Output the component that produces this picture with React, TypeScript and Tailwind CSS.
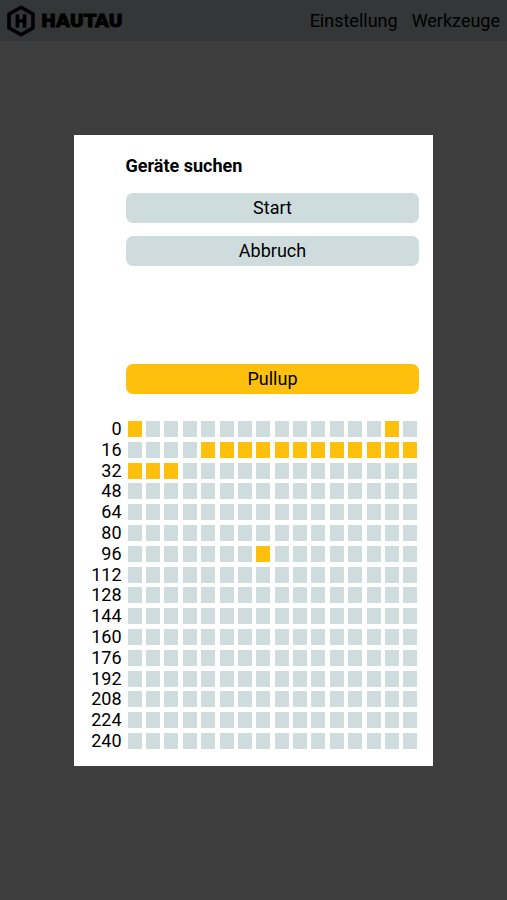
import React, { useState } from 'react';
import clsx from 'clsx';

const COLUMNS = 16;
const rows = Array.from({ length: 16 }, (_, i) => i * COLUMNS);

// addresses that answered on the bus
const foundDevices = new Set([
  0, 14,
  20, 21, 22, 23, 24, 25, 26, 27, 28, 29, 30, 31,
  32, 33, 34,
  103,
]);

const Logo: React.FC = () => (
  <a href="#" className="flex items-center gap-[6px] text-black">
    <svg viewBox="0 0 28 32" className="h-8 w-7" aria-hidden="true">
      <path d="M14 2.2 26 9.1v13.8L14 29.8 2 22.9V9.1Z" fill="none" stroke="currentColor" strokeWidth="3.6" strokeLinejoin="round" />
      <path d="M8.6 9.2h3.6v5h3.6v-5h3.6v13.6h-3.6v-5.2h-3.6v5.2H8.6Z" fill="currentColor" />
    </svg>
    <span className="font-['DejaVu_Sans',sans-serif] text-lg leading-8 font-bold [-webkit-text-stroke:1px_black]">
      HAUTAU
    </span>
  </a>
);

interface ActionButtonProps {
  label: string;
  active?: boolean;
  onClick?: () => void;
}

const ActionButton: React.FC<ActionButtonProps> = ({ label, active, onClick }) => (
  <button
    type="button"
    onClick={onClick}
    className={clsx(
      'h-[30px] w-full rounded-[7px] text-center leading-[30px]',
      active ? 'bg-[#ffc00d]' : 'bg-[#cfdcde]'
    )}
  >
    {label}
  </button>
);

const DeviceGrid: React.FC = () => (
  <table className="block" aria-label="Gefundene Geräte">
    <tbody className="grid h-[333px] auto-rows-fr">
      {rows.map((start) => (
        <tr key={start} className="grid grid-cols-[52px_repeat(16,minmax(0,1fr))] items-center">
          <th scope="row" className="pr-1 text-right leading-5 font-normal">
            {start}
          </th>
          {Array.from({ length: COLUMNS }, (_, i) => (
            <td
              key={i}
              className={clsx(
                'h-4 w-[14px] justify-self-center p-0',
                foundDevices.has(start + i) ? 'bg-[#ffc00d]' : 'bg-[#cfdcdd]'
              )}
            />
          ))}
        </tr>
      ))}
    </tbody>
  </table>
);

export default function App() {
  const [pullup, setPullup] = useState(true);

  return (
    <div className="min-h-screen bg-[#f5f5f5] font-[Roboto,sans-serif] text-lg text-black">
      <header className="flex h-[41px] items-center justify-between bg-[#cfd6d9] px-[7px]">
        <Logo />
        <nav className="flex gap-[14px]">
          <a href="#">Einstellung</a>
          <a href="#">Werkzeuge</a>
        </nav>
      </header>

      <div className="fixed inset-0 flex items-center justify-center bg-black/75">
        <div
          role="dialog"
          aria-labelledby="search-title"
          className="w-[71%] bg-white pt-4 pb-[14px]"
        >
          <div className="flex flex-col gap-[13px] pr-[14px] pl-[52px]">
            <h2 id="search-title" className="leading-[29px] font-bold">
              Geräte suchen
            </h2>
            <ActionButton label="Start" />
            <ActionButton label="Abbruch" />
            <div className="h-[72px]" />
            <ActionButton label="Pullup" active={pullup} onClick={() => setPullup(!pullup)} />
          </div>
          <div className="mt-[25px] pr-[14px]">
            <DeviceGrid />
          </div>
        </div>
      </div>
    </div>
  );
}
